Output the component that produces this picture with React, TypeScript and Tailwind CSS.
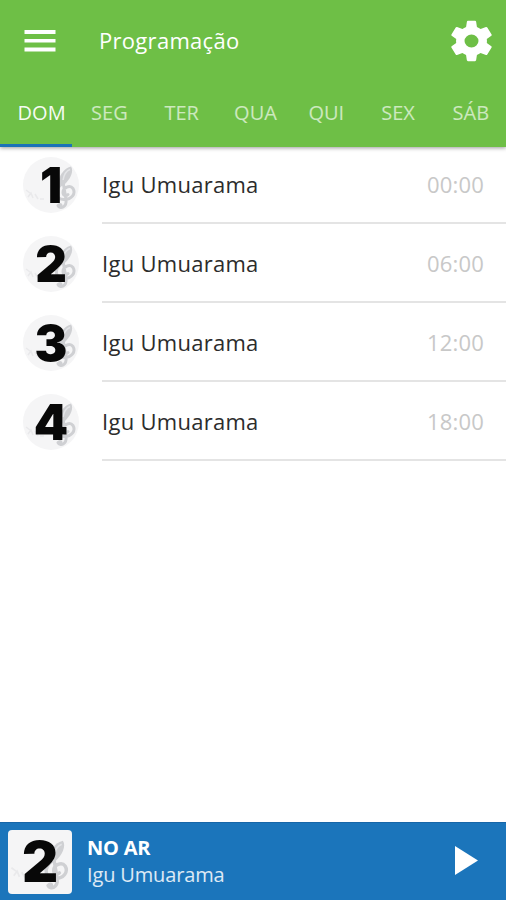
import { useState } from "react";

const days = [
  { label: "DOM", customStyle: "pl-[11px]" },
  { label: "SEG", customStyle: "pl-[2px]" },
  { label: "TER", customStyle: "pl-[2px]" },
  { label: "QUA", customStyle: "pl-[5px]" },
  { label: "QUI", customStyle: "pl-[2px]" },
  { label: "SEX", customStyle: "pl-px" },
  { label: "SÁB", customStyle: "pl-[2px]" },
];

const programs = [
  { number: "1", name: "Igu Umuarama", time: "00:00" },
  { number: "2", name: "Igu Umuarama", time: "06:00" },
  { number: "3", name: "Igu Umuarama", time: "12:00" },
  { number: "4", name: "Igu Umuarama", time: "18:00" },
];

function Cover({ number, customStyle }: { number: string; customStyle: string }) {
  return (
    <svg
      viewBox="0 0 56 56"
      className={`block shrink-0 overflow-visible bg-[#f5f5f6] ${customStyle}`}
    >
      {/* Faded notes */}
      <path
        d="M5 40l3-4 2 5M12 37l3 5M17 42h4M3 33l4 3"
        fill="none"
        stroke="#e9e9eb"
        strokeWidth="1.5"
      />
      {/* Treble clef */}
      <g transform="translate(0 -.5)">
        <path d="M35 27C36 20 40 12 48 10C51 14 48 23 40 29Z" fill="#cfd0d3" />
        <path d="M40 24C41 18 44 14 47 13" fill="none" stroke="#e4e5e8" strokeWidth="1.5" />
        <path
          d="M38 28C31 34 32 43 41 43C49 43 53 37 50 32C47 28 40 31 40 36C40 39 43 40 45 38M40 25L43 43C44 51 37 53 35 49"
          fill="none"
          stroke="#cfd0d3"
          strokeWidth="3"
          strokeLinecap="round"
        />
        <circle cx="37" cy="49" r="2.5" fill="#cfd0d3" />
      </g>
      <text
        x="28"
        y="45.500"
        textAnchor="middle"
        fontSize="49"
        className="fill-[#080808] font-['Inter',sans-serif] font-black"
      >
        {number}
      </text>
    </svg>
  );
}

function Header() {
  return (
    <div className="flex h-20 items-center pl-6 pr-3 text-white">
      <svg viewBox="0 0 32 22" className="mt-[2px] h-[22px] w-8 cursor-pointer" fill="currentColor">
        <path d="M.5 0h31v4H.5zM.5 9h31v3.5H.5zM.5 17.500h31v4H.5z" />
      </svg>
      <h1 className="ml-[43px] text-[22px] tracking-[0.3px]">Programação</h1>
      <svg
        viewBox="2 2 20 20"
        preserveAspectRatio="none"
        className="ml-auto mt-[2px] h-[42px] w-[45px] cursor-pointer"
        fill="currentColor"
      >
        <path d="M18.800 12.940c.04-.3.060-.61.060-.94s-.02-.64-.07-.94l2.030-1.580c.18-.14.23-.41.120-.61l-1.920-3.320c-.12-.22-.37-.29-.59-.22l-2.390.96c-.5-.38-1.030-.7-1.620-.94l-.36-2.540c-.04-.24-.24-.41-.48-.41h-3.160c-.24 0-.43.170-.47.410l-.36 2.540c-.59.240-1.130.570-1.620.940l-2.390-.96c-.22-.08-.47 0-.59.220L3.080 8.870c-.12.210-.08.470.120.610l2.030 1.580c-.05.300-.09.630-.09.940s.02.640.070.940l-2.030 1.580c-.18.140-.23.410-.12.610l1.920 3.320c.120.220.370.290.590.220l2.390-.96c.5.380 1.030.7 1.620.940l.36 2.540c.05.240.240.410.480.410h3.160c.240 0 .440-.17.470-.41l.36-2.540c.59-.24 1.130-.56 1.620-.94l2.390.96c.220.080.470 0 .590-.22l1.920-3.320c.120-.22.070-.47-.12-.61zM12 15.100a3.100 3.100 0 1 1 0-6.200 3.100 3.100 0 0 1 0 6.200z" />
      </svg>
    </div>
  );
}

export default function App() {
  const [activeDay, setActiveDay] = useState("DOM");

  return (
    <div className="flex h-screen w-full flex-col overflow-hidden bg-white font-['Open_Sans',sans-serif]">
      {/* Top bar */}
      <header className="z-10 h-[147px] shrink-0 bg-[#6ebf46] shadow-[0_1px_4px_rgba(0,0,0,0.4)]">
        <Header />
        <nav className="grid h-[67px] grid-cols-7">
          {days.map((day) => (
            <button
              key={day.label}
              onClick={() => setActiveDay(day.label)}
              className={`cursor-pointer border-b-[3px] pt-[2px] text-[20px] ${day.customStyle} ${
                activeDay === day.label
                  ? "border-[#1b72b8] text-white/95"
                  : "border-transparent text-white/65"
              }`}
            >
              {day.label}
            </button>
          ))}
        </nav>
      </header>

      {/* Program list */}
      <ul className="-mt-[2px] flex-1">
        {programs.map((program) => (
          <li key={program.number} className="flex h-[79px] items-center pl-[23px]">
            <Cover number={program.number} customStyle="h-14 w-14 rounded-full" />
            <div className="ml-[23px] flex h-full flex-1 items-center justify-between border-b-2 border-[#e4e4e4] pr-[22px] pt-px text-[22px]">
              <span className="tracking-[0.28px] text-[#2c2c2c]">{program.name}</span>
              <span className="tracking-[0.2px] text-[#c8c8c8]">{program.time}</span>
            </div>
          </li>
        ))}
      </ul>

      {/* Player */}
      <footer className="flex h-[78px] shrink-0 items-center border-t border-[#1766a8] bg-[#1b75bb] pl-2 text-white">
        <Cover number="2" customStyle="h-16 w-16 rounded" />
        <div className="mb-[2px] ml-[15px] text-[20px] leading-[27px]">
          <p className="font-bold tracking-[-0.2px]">NO AR</p>
          <p className="tracking-[-0.15px] text-white/85">Igu Umuarama</p>
        </div>
        <svg
          viewBox="0 0 23 29"
          className="mb-[2px] ml-auto mr-[28px] h-[29px] w-[23px] cursor-pointer"
          fill="currentColor"
        >
          <path d="M0 0l23 14.500L0 29z" />
        </svg>
      </footer>
    </div>
  );
}
